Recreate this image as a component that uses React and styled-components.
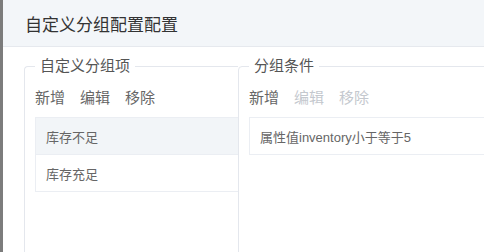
import React from 'react';
import styled, { createGlobalStyle } from 'styled-components';

const Global = createGlobalStyle`
  html, body {
    margin: 0;
    padding: 0;
    background: #fff;
    font-family: "Liberation Sans", "Noto Sans CJK SC", sans-serif;
  }
  #root {
    width: 484px;
    height: 252px;
    overflow: hidden;
  }
`;

const Page = styled.div`
  display: flex;
  width: 484px;
  height: 252px;
  overflow: hidden;
`;

const Strip = styled.div`
  width: 3px;
  flex: none;
  background: #7c7c7c;
`;

const Main = styled.div`
  flex: 1;
  min-width: 0;
  overflow: hidden;
`;

const Header = styled.div`
  height: 46px;
  display: flex;
  align-items: center;
  padding-left: 22px;
  background: #f3f6f9;
  border-bottom: 1px solid #e6e9ee;
  font-size: 17px;
  color: #333;
`;

const Body = styled.div`
  display: flex;
  padding: 9px 0 0 21px;
`;

const Group = styled.fieldset`
  box-sizing: border-box;
  flex: none;
  width: ${p => p.width}px;
  height: 230px;
  min-width: 0;
  margin: 0;
  padding: 12px 0 0 10px;
  border: 1px solid #e4e7ed;
  border-right: ${p => (p.open ? 'none' : '1px solid #e4e7ed')};
  border-radius: 4px 0 0 0;
`;

const Legend = styled.legend`
  margin: 0;
  padding: 0 5px;
  font-size: 15px;
  line-height: 20px;
  color: #555;
`;

const Actions = styled.div`
  display: flex;
  gap: 15px;
  height: 20px;
  margin-bottom: 9px;
`;

const Action = styled.span`
  font-size: 15px;
  line-height: 20px;
  color: ${p => (p.disabled ? '#c4c8ce' : '#666')};
  cursor: ${p => (p.disabled ? 'default' : 'pointer')};
`;

const List = styled.div`
  width: ${p => p.width}px;
  border: 1px solid #ebeef3;
  border-right: none;
`;

const Row = styled.div`
  height: 36px;
  display: flex;
  align-items: center;
  padding-left: 10px;
  font-size: 13px;
  color: #666;
  background: ${p => (p.active ? '#f2f5f8' : '#fff')};
  & + & {
    border-top: 1px solid #ebeef3;
  }
`;

const groups = ['库存不足', '库存充足'];

function App() {
  return (
    <>
      <Global />
      <Page>
        <Strip />
        <Main>
          <Header>自定义分组配置配置</Header>
          <Body>
            <Group width={214} open>
              <Legend>自定义分组项</Legend>
              <Actions>
                <Action>新增</Action>
                <Action>编辑</Action>
                <Action>移除</Action>
              </Actions>
              <List width={203}>
                {groups.map((g, i) => (
                  <Row key={g} active={i === 0}>{g}</Row>
                ))}
              </List>
            </Group>
            <Group width={320}>
              <Legend>分组条件</Legend>
              <Actions>
                <Action>新增</Action>
                <Action disabled>编辑</Action>
                <Action disabled>移除</Action>
              </Actions>
              <List width={300}>
                <Row>属性值inventory小于等于5</Row>
              </List>
            </Group>
          </Body>
        </Main>
      </Page>
    </>
  );
}

export default App;
